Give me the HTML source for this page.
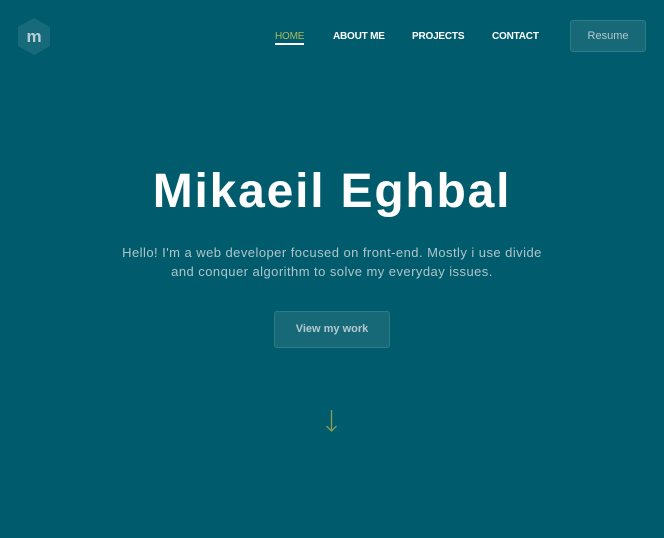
<!DOCTYPE html>
<html><head><meta charset="utf-8"><style>
html,body{margin:0;padding:0;width:664px;height:538px;overflow:hidden;background:#005c6c;font-family:"Liberation Sans",sans-serif;}
.nav a{position:absolute;top:31px;font-size:10px;font-weight:bold;color:#fff;white-space:nowrap;letter-spacing:-0.2px;}
.home{color:#a9b95e!important;font-weight:normal!important;}
.home:after{content:"";position:absolute;left:0;right:0;top:12px;height:2px;background:#fff;}
.btn{position:absolute;box-sizing:border-box;background:#176978;border:1px solid #2f7c89;border-radius:3px;color:#b3c9cf;text-align:center;}
</style></head><body>
<svg style="position:absolute;left:17px;top:18px" width="34" height="37" viewBox="0 0 34 37"><polygon points="17,0 33,9 33,28 17,37 1,28 1,9" fill="#176a7a"/><text x="17" y="24" text-anchor="middle" font-family="Liberation Sans" font-size="17" font-weight="bold" fill="#b8ced4">m</text></svg>
<div class="nav">
<a class="home" style="left:275px">HOME</a>
<a style="left:333px">ABOUT ME</a>
<a style="left:412px">PROJECTS</a>
<a style="left:492px">CONTACT</a>
</div>
<div class="btn" style="left:570px;top:20px;width:76px;height:32px;line-height:30px;font-size:11px">Resume</div>
<div style="position:absolute;left:0;width:664px;top:164px;text-align:center;color:#fff;font-size:48px;font-weight:bold;letter-spacing:1.8px">Mikaeil Eghbal</div>
<div style="position:absolute;left:0;width:664px;top:243px;text-align:center;color:#b0c3ca;font-size:13px;line-height:19px;letter-spacing:0.45px">Hello! I'm a web developer focused on front-end. Mostly i use divide<br>and conquer algorithm to solve my everyday issues.</div>
<div class="btn" style="left:274px;top:311px;width:116px;height:37px;line-height:35px;font-size:11px;font-weight:bold">View my work</div>
<svg style="position:absolute;left:325px;top:410px" width="13" height="24" viewBox="0 0 13 24"><path d="M6.5 0V21M1.5 16L6.5 21L11.5 16" stroke="#8c9c52" stroke-width="1.3" fill="none"/></svg>
</body></html>
